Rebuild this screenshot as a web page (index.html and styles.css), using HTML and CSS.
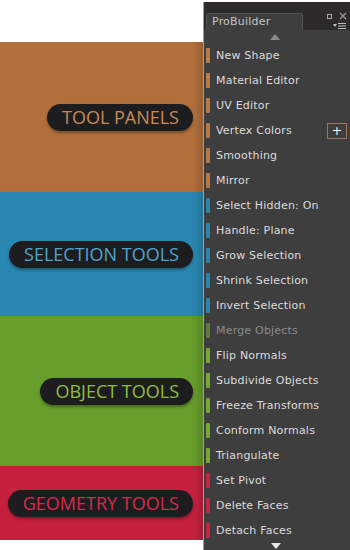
FILE: index.html
```html
<html lang="en">
  <head>
    <meta charset="UTF-8" />
    <meta name="viewport" content="width=device-width, initial-scale=1.0" />
    <title>ProBuilder</title>
    <link rel="stylesheet" href="styles.css">
  </head>
  <body>
    <div class="page">
      <div class="showcase">
        <div class="section orange"><span class="pill">TOOL PANELS</span></div>
        <div class="section blue"><span class="pill">SELECTION TOOLS</span></div>
        <div class="section green"><span class="pill">OBJECT TOOLS</span></div>
        <div class="section red"><span class="pill">GEOMETRY TOOLS</span></div>
      </div>

      <div class="panel">
        <div class="panel-head">
          <div class="tab">ProBuilder</div>
          <div class="head-icons">
            <span class="icon-max"></span>
            <svg class="icon-close" width="8" height="8" viewBox="0 0 8 8">
              <path d="M1 1 L7 7 M7 1 L1 7" stroke="#9a9a9a" stroke-width="1.2" />
            </svg>
            <svg class="icon-menu" width="14" height="8" viewBox="0 0 14 8">
              <path d="M0 2 L4 2 L2 5 Z" fill="#bdbdbd" />
              <path d="M5 1.5 H13 M5 4 H13 M5 6.5 H13" stroke="#bdbdbd" stroke-width="1.2" />
            </svg>
          </div>
        </div>

        <div class="arrow-up"></div>

        <ul class="tools">
          <li class="tool orange"><span class="bar"></span>New Shape</li>
          <li class="tool orange"><span class="bar"></span>Material Editor</li>
          <li class="tool orange"><span class="bar"></span>UV Editor</li>
          <li class="tool orange"><span class="bar"></span>Vertex Colors<span class="plus">+</span></li>
          <li class="tool orange"><span class="bar"></span>Smoothing</li>
          <li class="tool orange"><span class="bar"></span>Mirror</li>
          <li class="tool blue"><span class="bar"></span>Select Hidden: On</li>
          <li class="tool blue"><span class="bar"></span>Handle: Plane</li>
          <li class="tool blue"><span class="bar"></span>Grow Selection</li>
          <li class="tool blue"><span class="bar"></span>Shrink Selection</li>
          <li class="tool blue"><span class="bar"></span>Invert Selection</li>
          <li class="tool green disabled"><span class="bar"></span>Merge Objects</li>
          <li class="tool green"><span class="bar"></span>Flip Normals</li>
          <li class="tool green"><span class="bar"></span>Subdivide Objects</li>
          <li class="tool green"><span class="bar"></span>Freeze Transforms</li>
          <li class="tool green"><span class="bar"></span>Conform Normals</li>
          <li class="tool green"><span class="bar"></span>Triangulate</li>
          <li class="tool red"><span class="bar"></span>Set Pivot</li>
          <li class="tool red"><span class="bar"></span>Delete Faces</li>
          <li class="tool red"><span class="bar"></span>Detach Faces</li>
        </ul>

        <div class="arrow-down"></div>
      </div>
    </div>
  </body>
</html>
```

FILE: styles.css
```css
body {
  margin: 0;
  background: #ffffff;
  overflow: hidden;
}

.page {
  display: flex;
  height: 550px;
}

/* left side: coloured bands with labels */
.showcase {
  width: 203px;
  padding-top: 42px;
  display: flex;
  flex-direction: column;
}
.section {
  display: flex;
  align-items: center;
  justify-content: flex-end;
  padding-right: 10px;
  box-shadow: inset -10px 0 8px -6px rgba(0, 0, 0, 0.18);
}
.section.orange { height: 150px; background: #b3703c; }
.section.blue   { height: 124px; background: #2a87b1; }
.section.green  { height: 150px; background: #689e2c; }
.section.red    { height: 74px;  background: #c5213f; }

.pill {
  height: 27px;
  line-height: 27px;
  padding: 0 14px 0 15px;
  border-radius: 14px;
  background: #1d1d1f;
  font-family: "Open Sans", sans-serif;
  font-size: 18px;
  box-shadow: 0 2px 3px rgba(0, 0, 0, 0.35);
}
.orange .pill { color: #c98a55; }
.blue .pill   { color: #4ea4cf; }
.green .pill  { color: #8fbd3d; }
.red .pill    { color: #d52a4b; }

/* right side: ProBuilder window */
.panel {
  flex: 1;
  margin-top: 2px;
  border-left: 1px solid #45c7b9;
  background: #3e3e3e;
  font-family: "DejaVu Sans", sans-serif;
  font-size: 11px;
  letter-spacing: 0.2px;
  position: relative;
}
.panel-head {
  height: 28px;
  background: #2c2a2a;
  display: flex;
  align-items: flex-end;
  padding-left: 2px;
}
.tab {
  width: 90px;
  height: 16px;
  line-height: 16px;
  padding-left: 5px;
  background: #3e3e3e;
  border: 1px solid #555555;
  border-bottom: none;
  border-radius: 3px 3px 0 0;
  color: #c4c4c4;
}
.head-icons {
  position: absolute;
  top: 8px;
  right: 3px;
  width: 22px;
  height: 22px;
}
.icon-max {
  position: absolute;
  top: 4px;
  left: 2px;
  width: 3px;
  height: 3px;
  border: 1px solid #a8a8a8;
}
.icon-close {
  position: absolute;
  top: 2px;
  right: 0;
}
.icon-menu {
  position: absolute;
  top: 12px;
  right: 0;
}

.arrow-up,
.arrow-down {
  width: 0;
  height: 0;
  margin: 0 auto;
  border-left: 5px solid transparent;
  border-right: 5px solid transparent;
}
.arrow-up {
  margin-top: 4px;
  margin-bottom: 3px;
  border-bottom: 6px solid #8a8a8a;
  position: relative;
  left: -2px;
}
.arrow-down {
  margin-top: 0;
  border-top: 6px solid #e8e8e8;
  position: relative;
  left: -1px;
}

.tools {
  list-style: none;
  margin: 0;
  padding: 0;
}
.tool {
  height: 25px;
  display: flex;
  align-items: center;
  color: #dcdcdc;
  padding-left: 2px;
}
.tool.disabled {
  color: #8b8b8b;
}
.bar {
  width: 4px;
  height: 15px;
  margin-right: 6px;
  border-radius: 1px;
}
.tool.orange .bar { background: #b97a45; }
.tool.blue .bar   { background: #2b84ad; }
.tool.green .bar  { background: #76a834; }
.tool.red .bar    { background: #c52543; }
.tool.disabled .bar { background: #5f7a3c; }

.plus {
  margin-left: auto;
  margin-right: 3px;
  width: 18px;
  height: 14px;
  line-height: 14px;
  text-align: center;
  border: 1px solid #a47260;
  color: #f0f0f0;
  font-size: 13px;
}
```
